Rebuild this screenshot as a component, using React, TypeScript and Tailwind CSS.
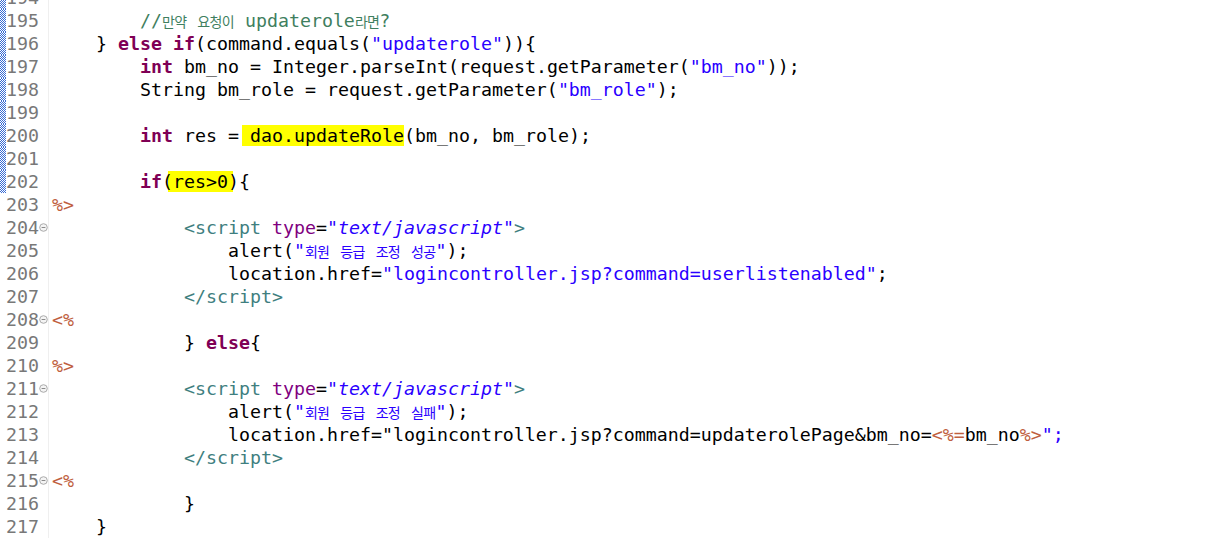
import React from "react";

const kw = "font-bold text-[#7f0055]";
const str = "text-[#2a00ff]";
const cmt = "text-[#3f7f5f]";
const jsp = "text-[#bf5f3f]";
const tag = "text-[#3f7f7f]";
const attr = "text-[#7f007f]";
const attrVal = "italic text-[#2a00ff]";

// korean glyphs come from a different font in the editor
const K = ({ children }: { children: React.ReactNode }) => (
  <span className="font-['Noto_Sans_CJK_KR',sans-serif] text-[14px] tracking-[-0.7px]">{children}</span>
);

const FoldIcon = () => (
  <svg width="9" height="9" viewBox="0 0 9 9">
    <circle cx="4.5" cy="4.5" r="3.8" fill="#f4f4f4" stroke="#a3a3a3" strokeWidth="0.9" />
    <line x1="2.6" y1="4.5" x2="6.4" y2="4.5" stroke="#8a8a8a" strokeWidth="1" />
  </svg>
);

interface RowProps {
  n: number;
  mark?: boolean;
  fold?: boolean;
  children?: React.ReactNode;
}

const Row = ({ n, mark, fold, children }: RowProps) => (
  <div className="flex h-[23px] items-center leading-[23px]">
    <div
      className={
        mark
          ? "h-full w-[6px] bg-[repeating-conic-gradient(#3a6cd4_0%_25%,#ffffff_0%_50%)] bg-[length:2px_2px]"
          : "h-full w-[6px]"
      }
    />
    <div className="w-[33px] text-right text-[#787878]">{n}</div>
    <div className="flex h-full w-[9px] items-center justify-center">{fold && <FoldIcon />}</div>
    <div className="h-full w-px bg-[#efefef]" />
    <div className="whitespace-pre pl-[3px] text-black">{children}</div>
  </div>
);

const I4 = "    ";
const I8 = "        ";
const I12 = "            ";
const I16 = "                ";

const App = () => {
  return (
    <div className="h-[541px] w-[1208px] overflow-hidden bg-white font-['DejaVu_Sans_Mono',monospace] text-[18.27px]">
      <div className="-mt-[14px] flex flex-col">
        <Row n={194} mark />
        <Row n={195} mark>
          <span className={cmt}>
            {I8}//<K>만약</K> <K>요청이</K> updaterole<K>라면</K>?
          </span>
        </Row>
        <Row n={196} mark>
          {I4 + "} "}
          <span className={kw}>else</span> <span className={kw}>if</span>(command.equals(
          <span className={str}>"updaterole"</span>)){"{"}
        </Row>
        <Row n={197} mark>
          {I8}
          <span className={kw}>int</span> bm_no = Integer.parseInt(request.getParameter(
          <span className={str}>"bm_no"</span>));
        </Row>
        <Row n={198} mark>
          {I8}String bm_role = request.getParameter(<span className={str}>"bm_role"</span>);
        </Row>
        <Row n={199} mark />
        <Row n={200} mark>
          {I8}
          <span className={kw}>int</span> res = <span className="-ml-[8px] bg-[#ffff00] pl-[8px]">dao.updateRole</span>
          (bm_no, bm_role);
        </Row>
        <Row n={201} mark />
        <Row n={202} mark>
          {I8}
          <span className={kw}>if</span>
          <span className="bg-[linear-gradient(to_right,transparent_6px,#ffff00_6px)]">(</span>
          <span className="bg-[#ffff00]">res&gt;0</span>
          <span className="bg-[linear-gradient(to_right,#ffff00_5px,transparent_5px)]">)</span>
          {"{"}
        </Row>
        <Row n={203}>
          <span className={jsp}>%&gt;</span>
        </Row>
        <Row n={204} fold>
          {I12}
          <span className={tag}>&lt;script</span> <span className={attr}>type</span>=
          <span className={attrVal}>"text/javascript"</span>
          <span className={tag}>&gt;</span>
        </Row>
        <Row n={205}>
          {I16}alert(
          <span className={str}>
            "<K>회원</K> <K>등급</K> <K>조정</K> <K>성공</K>"
          </span>
          );
        </Row>
        <Row n={206}>
          {I16}location.href=<span className={str}>"logincontroller.jsp?command=userlistenabled"</span>;
        </Row>
        <Row n={207}>
          {I12}
          <span className={tag}>&lt;/script&gt;</span>
        </Row>
        <Row n={208} fold>
          <span className={jsp}>&lt;%</span>
        </Row>
        <Row n={209}>
          {I12 + "} "}
          <span className={kw}>else</span>
          {"{"}
        </Row>
        <Row n={210}>
          <span className={jsp}>%&gt;</span>
        </Row>
        <Row n={211} fold>
          {I12}
          <span className={tag}>&lt;script</span> <span className={attr}>type</span>=
          <span className={attrVal}>"text/javascript"</span>
          <span className={tag}>&gt;</span>
        </Row>
        <Row n={212}>
          {I16}alert(
          <span className={str}>
            "<K>회원</K> <K>등급</K> <K>조정</K> <K>실패</K>"
          </span>
          );
        </Row>
        <Row n={213}>
          {I16}
          {'location.href="logincontroller.jsp?command=updaterolePage&bm_no='}
          <span className={jsp}>&lt;%=</span>bm_no<span className={jsp}>%&gt;</span>
          <span className={str}>";</span>
        </Row>
        <Row n={214}>
          {I12}
          <span className={tag}>&lt;/script&gt;</span>
        </Row>
        <Row n={215} fold>
          <span className={jsp}>&lt;%</span>
        </Row>
        <Row n={216}>{I12 + "}"}</Row>
        <Row n={217}>{I4 + "}"}</Row>
      </div>
    </div>
  );
};

export default App;
